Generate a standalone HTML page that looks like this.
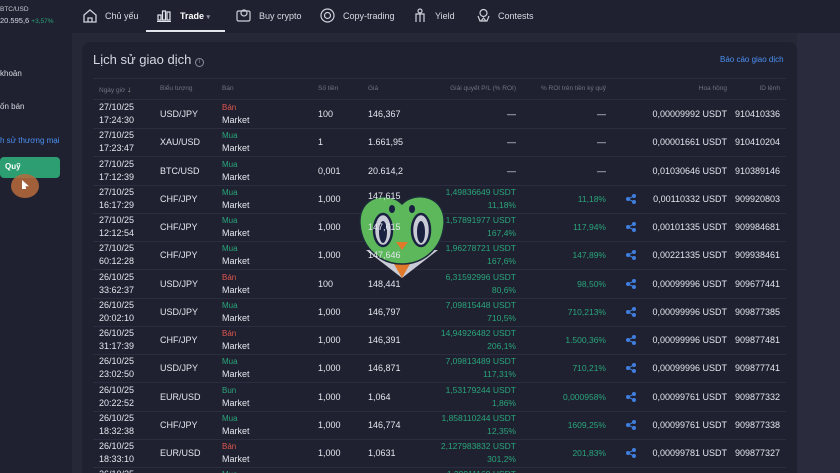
<!DOCTYPE html>
<html style="width:840px;height:473px;overflow:hidden"><head><meta charset="utf-8"><style>
*{margin:0;padding:0;box-sizing:border-box}
body{width:840px;height:473px;overflow:hidden;background:#262838;font-family:"Liberation Sans","Noto Sans CJK SC",sans-serif;color:#e4e6ee;position:relative}
.side{position:absolute;left:0;top:0;width:72px;height:473px;background:#1f2130}
.nav{position:absolute;left:72px;top:0;width:768px;height:33px;background:#1f2130}
.card{position:absolute;left:82px;top:42px;width:715px;height:431px;background:#1f2130;border-radius:8px 8px 0 0}
.rt{position:absolute;left:797px;top:33px;width:43px;height:440px;background:#2a2c3d}
.a{position:absolute;white-space:nowrap}
.t{font-size:9px;line-height:13px}
.h{font-size:6.5px;color:#6f7386}
.r{text-align:right}
.g{color:#2aa57a}.red{color:#e0564f}
.ln{position:absolute;left:93px;width:693px;height:1px;background:#2b2e3e}
.nv{font-size:9px;color:#d8dae3;top:11px}
#wrap{position:absolute;left:0;top:0;width:840px;height:473px;overflow:hidden}
</style></head><body><div id="wrap">
<div class="side"></div><div class="nav"></div><div class="rt"></div>
<div class="a" style="left:0;top:6px;font-size:6.5px;color:#c8cad4">BTC/USD</div>
<div class="a" style="left:0;top:16px;font-size:7.5px;color:#d8dae3">20.595,6 <span class="g" style="font-size:6.5px">+3,57%</span></div>
<div class="a" style="left:0;top:69px;font-size:8px;color:#d8dae3">khoản</div>
<div class="a" style="left:0;top:102px;font-size:8px;color:#d8dae3">ốn bán</div>
<div class="a" style="left:0;top:136px;font-size:8px;color:#4a8ff0">h sử thương mại</div>
<div class="a" style="left:0;top:157px;width:60px;height:21px;background:#2d9e72;border-radius:4px"></div>
<div class="a" style="left:5px;top:162px;font-size:8px;color:#fff;font-weight:bold">Quỹ</div>
<div class="a" style="left:11px;top:174px;width:28px;height:24px;border-radius:50%;background:#b96a3c;opacity:.85"></div>
<div class="a" style="left:22px;top:180px;width:7px;height:9px;background:#fff;clip-path:polygon(0 0,100% 70%,50% 70%,60% 100%,30% 100%,0 100%)"></div>
<svg class="a" style="left:82px;top:8px" width="16" height="16" viewBox="0 0 16 16" fill="none" stroke="#cfd1da" stroke-width="1.3"><path d="M2 7L8 2l6 5v7H2z"/><path d="M6 14v-4h4v4"/></svg>
<div class="a nv" style="left:105px">Chủ yếu</div>
<svg class="a" style="left:157px;top:9px" width="14" height="13" viewBox="0 0 14 13" fill="none" stroke="#e4e6ee" stroke-width="1.2"><rect x="1" y="6" width="3" height="5"/><rect x="5.5" y="2" width="3" height="9"/><rect x="10" y="3" width="3" height="8"/><path d="M0 12.5h14"/></svg>
<div class="a nv" style="left:180px;font-weight:bold;color:#fff">Trade <span style="color:#8a8ea0;font-size:7px">▾</span></div>
<div class="a" style="left:146px;top:30px;width:79px;height:2px;background:#e4e6ee"></div>
<svg class="a" style="left:236px;top:8px" width="15" height="15" viewBox="0 0 15 15" fill="none" stroke="#cfd1da" stroke-width="1.2"><rect x="1" y="3" width="13" height="10" rx="1.5"/><circle cx="8" cy="5" r="3"/></svg>
<div class="a nv" style="left:259px">Buy crypto</div>
<svg class="a" style="left:320px;top:8px" width="15" height="15" viewBox="0 0 15 15" fill="none" stroke="#cfd1da" stroke-width="1.2"><circle cx="7.5" cy="7.5" r="6.5"/><circle cx="7.5" cy="7.5" r="3"/></svg>
<div class="a nv" style="left:343px">Copy-trading</div>
<svg class="a" style="left:414px;top:8px" width="12" height="15" viewBox="0 0 12 15" fill="none" stroke="#cfd1da" stroke-width="1.2"><circle cx="6" cy="3" r="2"/><path d="M2 14V6h8v8M6 6v8"/></svg>
<div class="a nv" style="left:435px">Yield</div>
<svg class="a" style="left:476px;top:8px" width="15" height="15" viewBox="0 0 15 15" fill="none" stroke="#cfd1da" stroke-width="1.2"><circle cx="7.5" cy="5" r="3.5"/><path d="M2 8l2 5h7l2-5M5 13l2.5-3 2.5 3"/></svg>
<div class="a nv" style="left:498px">Contests</div>
<div class="card"></div>
<div class="a" style="left:93px;top:52px;font-size:13px;color:#d6d8e2">Lịch sử giao dịch <span style="display:inline-block;width:9px;height:9px;border:1px solid #8a8ea0;border-radius:50%;font-size:6px;line-height:7px;text-align:center;color:#8a8ea0;vertical-align:1px">i</span></div>
<div class="a" style="left:720px;top:55px;font-size:8px;color:#4a8ff0">Báo cáo giao dịch</div>
<div class="ln" style="top:78px"></div>
<div class="a h" style="left:99px;top:85px">Ngày giờ <b style="color:#aaa;font-size:8px">↓</b></div>
<div class="a h" style="left:160px;top:85px">Biểu tượng</div>
<div class="a h" style="left:222px;top:85px">Bán</div>
<div class="a h" style="left:318px;top:85px">Số tiền</div>
<div class="a h" style="left:368px;top:85px">Giá</div>
<div class="a h r" style="left:400px;width:116px;top:85px">Giải quyết P/L (% ROI)</div>
<div class="a h r" style="left:500px;width:106px;top:85px">% ROI trên tiền ký quỹ</div>
<div class="a h r" style="left:650px;width:77px;top:85px">Hoa hồng</div>
<div class="a h r" style="left:740px;width:40px;top:85px">ID lệnh</div>
<div class="ln" style="top:99px"></div>
<div id="rows"></div>
<svg class="a" style="left:358px;top:192px" width="88" height="88" viewBox="0 0 88 88">
<path d="M8 58 L44 86 L80 58 Z" fill="#c9cbd6"/>
<path d="M36 72 L44 86 L52 72 Z" fill="#e07a2a"/>
<path d="M44 12 C30 -2 0 4 2 32 C4 58 24 72 44 72 C64 72 84 58 86 32 C88 4 58 -2 44 12 Z" fill="#5cb85a" stroke="#1d2a3a" stroke-width="1.5"/>
<ellipse cx="34" cy="17" rx="3" ry="4" fill="#1a2140"/><ellipse cx="54" cy="17" rx="3" ry="4" fill="#1a2140"/>
<ellipse cx="25" cy="38" rx="9" ry="16" fill="#c9cbd6" stroke="#1a2140" stroke-width="2.5"/>
<ellipse cx="63" cy="38" rx="9" ry="16" fill="#c9cbd6" stroke="#1a2140" stroke-width="2.5"/>
<ellipse cx="25" cy="40" rx="4" ry="11" fill="#1a2140"/><ellipse cx="63" cy="40" rx="4" ry="11" fill="#1a2140"/>
<path d="M38 50 L50 50 L44 58 Z" fill="#e07a2a"/>
</svg>
<div class="a t" style="left:368px;top:190px">147,615</div>
<div class="a t" style="left:368px;top:221px">147,615</div>
<div class="a t" style="left:368px;top:249px">147,646</div>
</div>
<script>
var R=[["27/10/25","17:24:30","USD/JPY","Bán","100","146,367","","","","0,00009992 USDT","910410336"],
["27/10/25","17:23:47","XAU/USD","Mua","1","1.661,95","","","","0,00001661 USDT","910410204"],
["27/10/25","17:12:39","BTC/USD","Mua","0,001","20.614,2","","","","0,01030646 USDT","910389146"],
["27/10/25","16:17:29","CHF/JPY","Mua","1,000","","1,49836649 USDT","11,18%","11,18%","0,00110332 USDT","909920803"],
["27/10/25","12:12:54","CHF/JPY","Mua","1,000","","1,57891977 USDT","167,4%","117,94%","0,00101335 USDT","909984681"],
["27/10/25","60:12:28","CHF/JPY","Mua","1,000","","1,96278721 USDT","167,6%","147,89%","0,00221335 USDT","909938461"],
["26/10/25","33:62:37","USD/JPY","Bán","100","148,441","6,31592996 USDT","80,6%","98,50%","0,00099996 USDT","909677441"],
["26/10/25","20:02:10","USD/JPY","Mua","1,000","146,797","7,09815448 USDT","710,5%","710,213%","0,00099996 USDT","909877385"],
["26/10/25","31:17:39","CHF/JPY","Bán","1,000","146,391","14,94926482 USDT","206,1%","1.500,36%","0,00099996 USDT","909877481"],
["26/10/25","23:02:50","USD/JPY","Mua","1,000","146,871","7,09813489 USDT","117,31%","710,21%","0,00099996 USDT","909877741"],
["26/10/25","20:22:52","EUR/USD","Bun","1,000","1,064","1,53179244 USDT","1,86%","0,000958%","0,00099761 USDT","909877332"],
["26/10/25","18:32:38","CHF/JPY","Mua","1,000","146,774","1,858110244 USDT","12,35%","1609,25%","0,00099761 USDT","909877338"],
["26/10/25","18:33:10","EUR/USD","Bán","1,000","1,0631","2,127983832 USDT","301,2%","201,83%","0,00099781 USDT","909877327"],
["26/10/25","18:20:10","USD/JPY","Mua","1,000","146,6","1,29911169 USDT","","","",""]];
var h="";
R.forEach(function(r,i){var y=100+i*28.25;var c=r[3]=="Bán"?"red":"g";
h+='<div class="a t" style="left:99px;top:'+(y+1)+'px">'+r[0]+'<br>'+r[1]+'</div>';
h+='<div class="a t" style="left:160px;top:'+(y+8)+'px">'+r[2]+'</div>';
h+='<div class="a t" style="left:222px;top:'+(y+1)+'px"><span class="'+c+'" style="font-size:8px">'+r[3]+'</span><br>Market</div>';
h+='<div class="a t" style="left:318px;top:'+(y+8)+'px">'+r[4]+'</div>';
if(r[5])h+='<div class="a t" style="left:368px;top:'+(y+8)+'px">'+r[5]+'</div>';
if(r[6]){h+='<div class="a t r g" style="left:400px;width:116px;top:'+(y+1)+'px;font-size:8.5px">'+r[6]+'<br>'+r[7]+'</div>';
if(r[8])h+='<div class="a t r g" style="left:500px;width:106px;top:'+(y+8)+'px;font-size:8.5px">'+r[8]+'</div>';
h+='<svg class="a" style="left:626px;top:'+(y+9)+'px" width="10" height="10" viewBox="0 0 10 10" fill="#3f7fe0" stroke="#3f7fe0" stroke-width="1"><circle cx="8" cy="2" r="1.5"/><circle cx="2" cy="5" r="1.5"/><circle cx="8" cy="8" r="1.5"/><path d="M8 2L2 5l6 3" fill="none"/></svg>';}
else{h+='<div class="a t r" style="left:400px;width:116px;top:'+(y+8)+'px">—</div><div class="a t r" style="left:500px;width:106px;top:'+(y+8)+'px">—</div>';}
if(r[9]){h+='<div class="a t r" style="left:620px;width:107px;top:'+(y+8)+'px">'+r[9]+'</div>';
h+='<div class="a t r" style="left:730px;width:50px;top:'+(y+8)+'px">'+r[10]+'</div>';}
h+='<div class="ln" style="top:'+(y+28)+'px"></div>';});
document.getElementById("rows").innerHTML=h;
</script>
</body></html>
